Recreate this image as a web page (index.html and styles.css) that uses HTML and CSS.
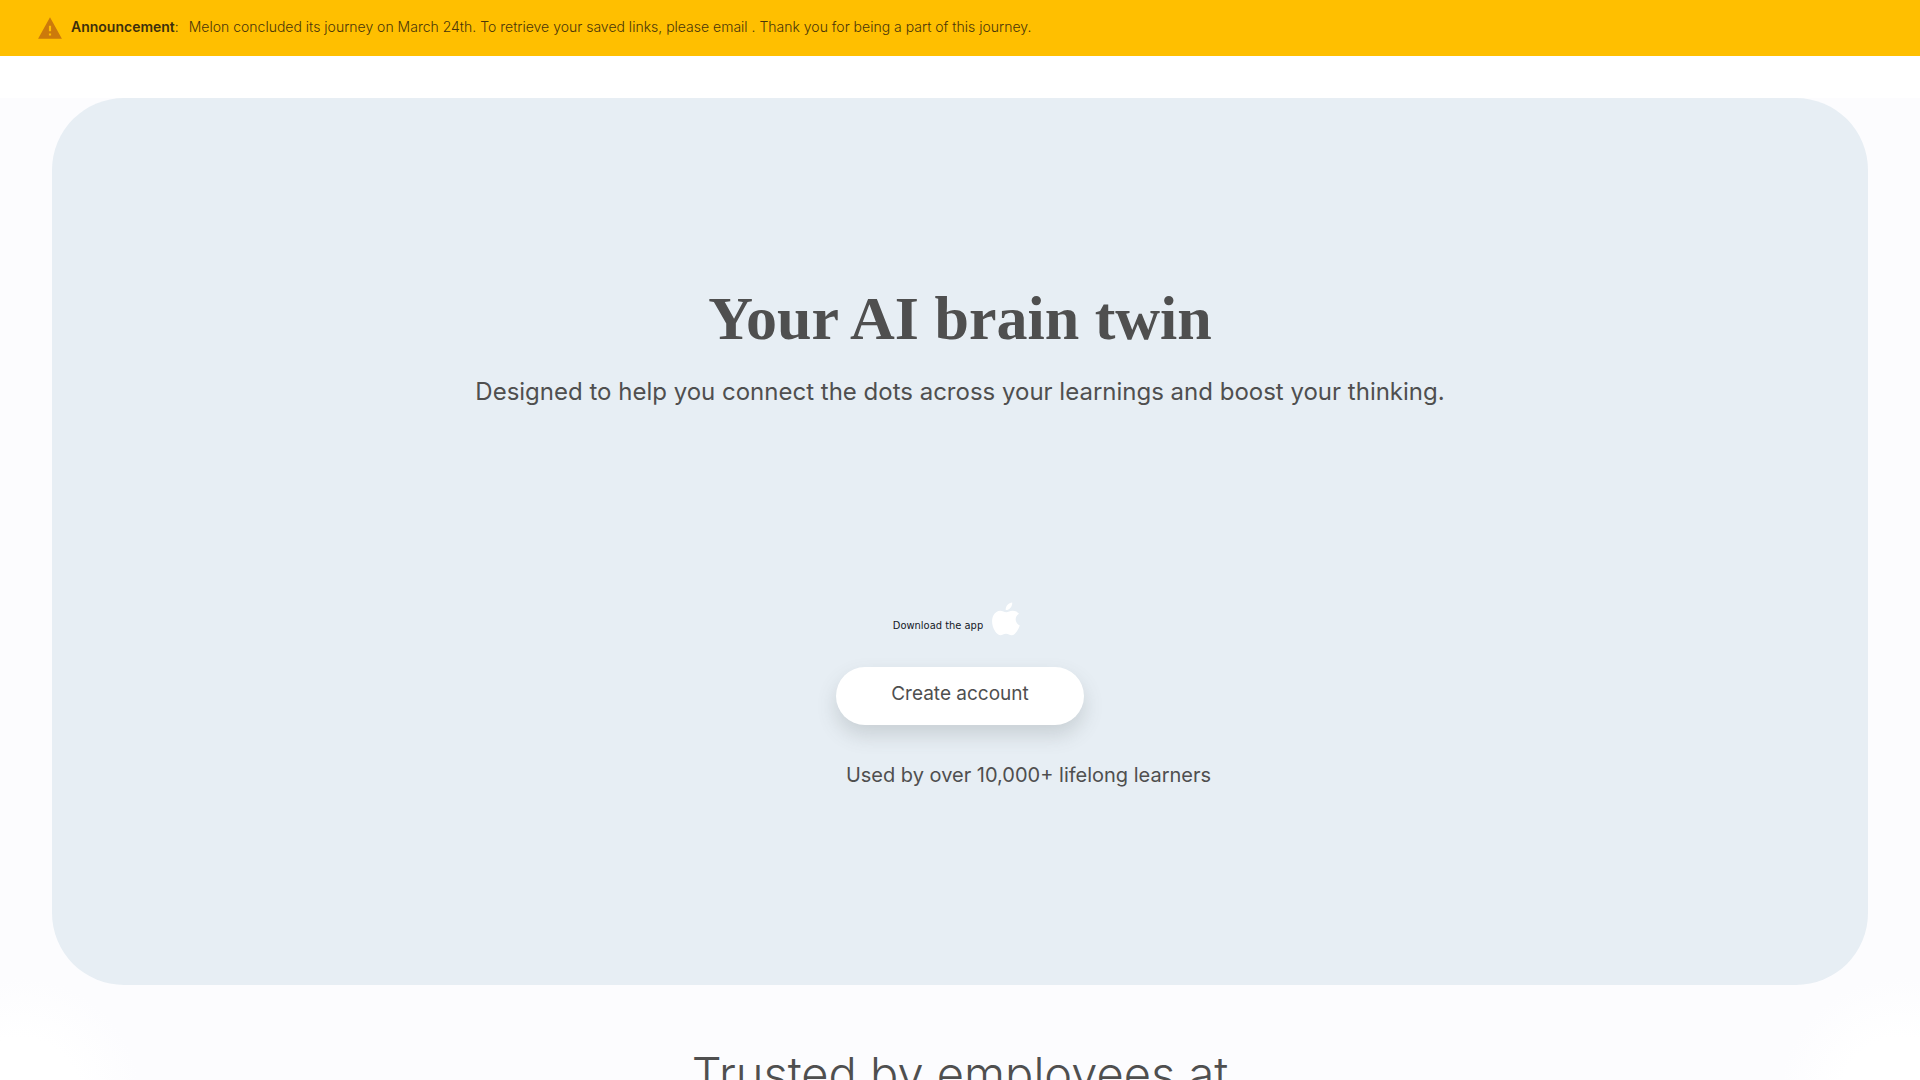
FILE: index.html
```html
<!DOCTYPE html>
<html lang="en">
<head>
    <meta charset="UTF-8">
    <meta name="viewport" content="width=device-width, initial-scale=1">
    <title>Melon</title>
    <link rel="stylesheet" href="styles.css">
</head>
<body>
    <div class="banner">
        <svg class="banner-icon" width="26" height="26" viewBox="0 0 24 24" aria-hidden="true">
            <path fill="#cc7a0b" fill-rule="evenodd" d="M1 22h22L12 2 1 22zm12-3h-2v-2h2v2zm0-4h-2v-5h2v5z"/>
        </svg>
        <p class="banner-text"><strong>Announcement</strong>:</p>
        <p class="banner-text">Melon concluded its journey on March 24th. To retrieve your saved links, please email . Thank you for being a part of this journey.</p>
    </div>

    <main>
        <section class="hero">
            <h1>Your AI brain twin</h1>
            <p class="subtitle">Designed to help you connect the dots across your learnings and boost your thinking.</p>
            <a class="download" href="#">
                <span>Download the app</span>
                <svg width="28" height="34" viewBox="0 0 28 34" aria-hidden="true">
                    <path fill="#fff" d="M20.2 0.4c.2 2-.6 3.900-1.700 5.300-1.200 1.500-3.100 2.500-4.800 2.400-.3-1.900.6-3.900 1.700-5.200C16.600 1.500 18.600.5 20.200.4z"/>
                    <path fill="#fff" d="M27 11.800c-2 1.200-3.300 3-3.300 5.500 0 2.800 1.600 5.100 4.100 6.100-.6 1.900-1.500 3.800-2.700 5.500-1.500 2.200-3.100 4.300-5.500 4.300-2.300 0-3-1.400-5.600-1.400-2.700 0-3.400 1.400-5.600 1.400-2.400 0-4.100-2.300-5.600-4.500C-.2 24.300-.9 17.300 1.600 13c1.500-2.600 4-4.200 6.600-4.200 2.500 0 4 1.400 6.100 1.400 2 0 3.600-1.500 6.500-1.400 2.400 0 4.700 1.100 6.200 3z"/>
                </svg>
            </a>
            <button class="create" type="button">Create account</button>
            <p class="learners">Used by over 10,000+ lifelong learners</p>
        </section>

        <section class="trusted">
            <h2>Trusted by employees at</h2>
        </section>
    </main>
</body>
</html>
```

FILE: styles.css
```css
body {
    margin: 0;
    font-family: Inter, sans-serif;
    color: #4f4f4f;
    background-color: #fff;
}
.banner {
    display: flex;
    align-items: center;
    gap: 10px;
    height: 56px;
    padding: 0 37px;
    background-color: #ffbf00;
    margin-bottom: 42px;
}
.banner-icon {
    flex: none;
    margin-right: -2px;
}
.banner-text {
    margin: 0;
    padding-bottom: 2px;
    font-size: 14px;
    line-height: 20px;
    font-weight: 300;
    color: #4a360a;
}
.banner-text strong {
    font-weight: 600;
    color: #3d2f0c;
}
main {
    background:
        radial-gradient(circle at 20px 1000px, #fff 60px, #fcfcfe 120px) left / 50% 100% no-repeat,
        radial-gradient(circle at calc(100% - 20px) 1000px, #fff 60px, #fcfcfe 120px) right / 50% 100% no-repeat;
}
.hero {
    display: flex;
    flex-direction: column;
    align-items: center;
    margin: 0 52px;
    padding: 180px 24px 195px;
    background-color: #e7eef4;
    border-radius: 72px;
    text-align: center;
}
h1 {
    margin: 0;
    font-family: "Liberation Serif", serif;
    font-size: 62px;
    line-height: 80px;
    font-weight: bold;
}
.subtitle {
    margin: 16px 0 0;
    font-size: 24px;
    line-height: 36px;
}
.download {
    display: flex;
    align-items: flex-end;
    gap: 9px;
    margin-top: 192px;
    padding-right: 7px;
    font-family: "DejaVu Sans Condensed", "DejaVu Sans", sans-serif;
    font-size: 11px;
    line-height: 20px;
    color: #14181f;
    text-decoration: none;
}
.create {
    width: 248px;
    height: 58px;
    margin-top: 31px;
    padding: 0 0 6px;
    border: none;
    border-radius: 29px;
    background-color: #fff;
    box-shadow: 0 10px 20px rgba(80, 90, 90, 0.2);
    font-family: inherit;
    font-size: 19px;
    color: #4f4f4f;
    cursor: pointer;
}
.learners {
    margin: 35px 0 0;
    padding-left: 137px;
    font-size: 20px;
    line-height: 30px;
}
.trusted {
    padding: 58px 24px;
    text-align: center;
}
h2 {
    margin: 0;
    font-size: 47px;
    line-height: 62px;
    font-weight: 300;
}
```
